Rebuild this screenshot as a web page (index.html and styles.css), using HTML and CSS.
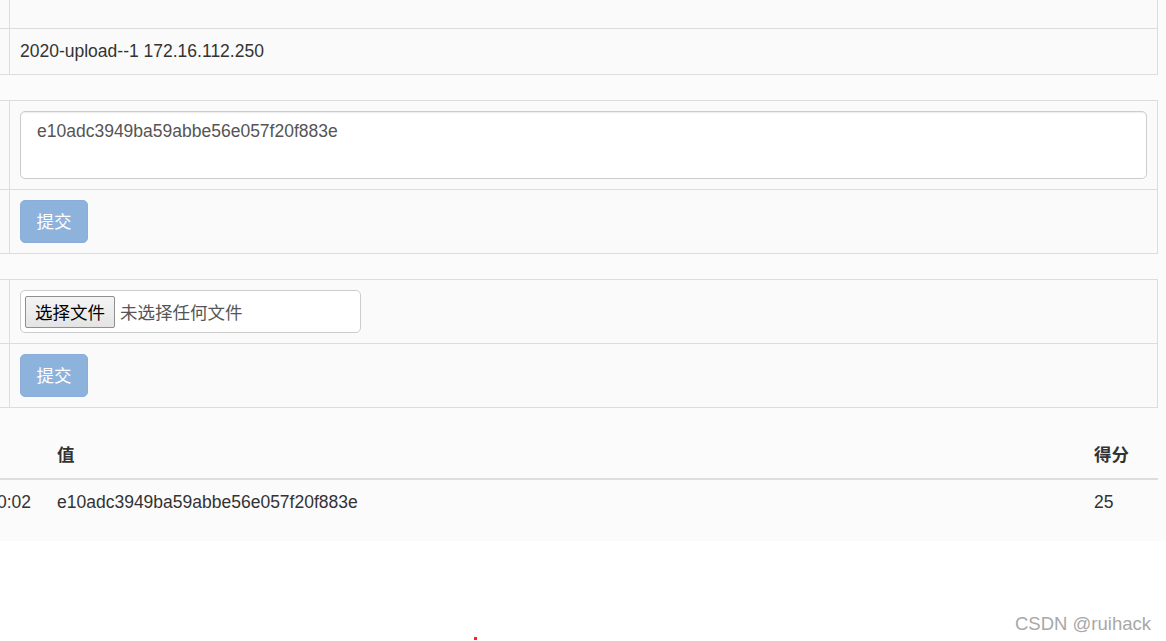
FILE: index.html
```html
<!DOCTYPE html>
<html>
<head>
<meta charset="utf-8">
<link rel="stylesheet" href="styles.css">
</head>
<body>
<div class="panel">
  <div class="inner">
    <table class="tbl bordered">
      <tr><td class="c-label"></td><td class="c-main empty"></td></tr>
      <tr><td class="c-label"></td><td class="c-main">2020-upload--1 172.16.112.250</td></tr>
    </table>

    <table class="tbl bordered">
      <tr><td class="c-label"></td><td class="c-main"><textarea class="ta">e10adc3949ba59abbe56e057f20f883e</textarea></td></tr>
      <tr><td class="c-label"></td><td class="c-main"><span class="btn">提交</span></td></tr>
    </table>

    <table class="tbl bordered">
      <tr><td class="c-label"></td><td class="c-main">
        <div class="file">
          <span class="file-btn">选择文件</span><span class="file-txt">未选择任何文件</span>
        </div>
      </td></tr>
      <tr><td class="c-label"></td><td class="c-main"><span class="btn">提交</span></td></tr>
    </table>

    <table class="tbl list">
      <thead>
        <tr><th class="l-time"></th><th class="l-val">值</th><th class="l-score">得分</th></tr>
      </thead>
      <tbody>
        <tr><td class="l-time">2020-10-10 10:00:02</td><td class="l-val">e10adc3949ba59abbe56e057f20f883e</td><td class="l-score">25</td></tr>
      </tbody>
    </table>
  </div>
</div>
<div class="mark">CSDN @ruihack</div>
<div class="dot"></div>
</body>
</html>
```

FILE: styles.css
```css
html, body {
  margin: 0;
  padding: 0;
  background: #ffffff;
}
body {
  width: 1166px;
  height: 641px;
  overflow: hidden;
  position: relative;
  font-family: "Liberation Sans", Arial, "Noto Sans CJK SC", sans-serif;
  font-size: 17.5px;
  line-height: 25px;
  color: #333333;
}
.panel {
  width: 1166px;
  background: #fbfbfb;
  overflow: hidden;
  padding-bottom: 16px;
}
.inner {
  width: 1358px;
  margin-left: -200px;
  margin-top: -18px;
}
.tbl {
  width: 1358px;
  border-collapse: collapse;
  border-spacing: 0;
  margin-bottom: 25px;
  background: #fafafa;
  table-layout: fixed;
}
.tbl:last-child {
  margin-bottom: 0;
}
.bordered td {
  border: 1px solid #dddddd;
  padding: 10px;
  vertical-align: top;
}
.c-label {
  width: 188px;
}
.empty {
  height: 25px;
}
.ta {
  display: block;
  box-sizing: border-box;
  width: 1127px;
  height: 68px;
  margin: 0;
  padding: 7px 16px;
  border: 1px solid #cccccc;
  border-radius: 5px;
  background: #ffffff;
  font-family: "Liberation Sans", Arial, sans-serif;
  font-size: 17.5px;
  line-height: 25px;
  color: #555555;
  resize: none;
  box-shadow: inset 0 1px 1px rgba(0,0,0,0.075);
}
.btn {
  display: inline-block;
  box-sizing: border-box;
  width: 68px;
  height: 43px;
  padding: 7px 0 9px;
  text-align: center;
  border: 1px solid #8aaed8;
  border-radius: 5px;
  background: #8db2dc;
  color: #ffffff;
  font-family: "Noto Sans CJK SC", sans-serif;
  font-size: 17.5px;
  line-height: 25px;
}
.file {
  box-sizing: border-box;
  width: 341px;
  height: 43px;
  border: 1px solid #cccccc;
  border-radius: 5px;
  background: #ffffff;
  display: flex;
  align-items: center;
  padding-left: 4px;
}
.file-btn {
  box-sizing: border-box;
  width: 90px;
  height: 32px;
  padding: 0;
  text-align: center;
  border: 1px solid #8f8f8f;
  border-radius: 2px;
  background: linear-gradient(#f4f4f4, #e4e4e4);
  color: #000000;
  font-family: "Noto Sans CJK SC", sans-serif;
  font-size: 17.5px;
  line-height: 29px;
}
.file-txt {
  margin-left: 5px;
  color: #555555;
  font-family: "Noto Sans CJK SC", sans-serif;
  font-size: 17.5px;
}
.list {
  background: transparent;
}
.list th, .list td {
  padding: 10px;
  text-align: left;
  vertical-align: top;
}
.list th {
  font-weight: bold;
  font-family: "Liberation Sans", "Noto Sans CJK SC", sans-serif;
  border-bottom: 2.5px solid #dddddd;
}
.list td {
  border-top: 1px solid #dddddd;
}
.list tbody tr:first-child td {
  border-top: 0;
}
.l-time {
  width: 221px;
  text-align: right !important;
  padding-right: 16px !important;
  color: #333333;
  white-space: nowrap;
}
.l-score {
  width: 54px;
}
.mark {
  position: absolute;
  left: 1015px;
  top: 612px;
  font-family: "Liberation Sans", Arial, sans-serif;
  font-size: 18.5px;
  line-height: 24px;
  color: #a8a8a8;
}
.dot {
  position: absolute;
  left: 474px;
  top: 637px;
  width: 3px;
  height: 3px;
  background: #ff2020;
}
```
